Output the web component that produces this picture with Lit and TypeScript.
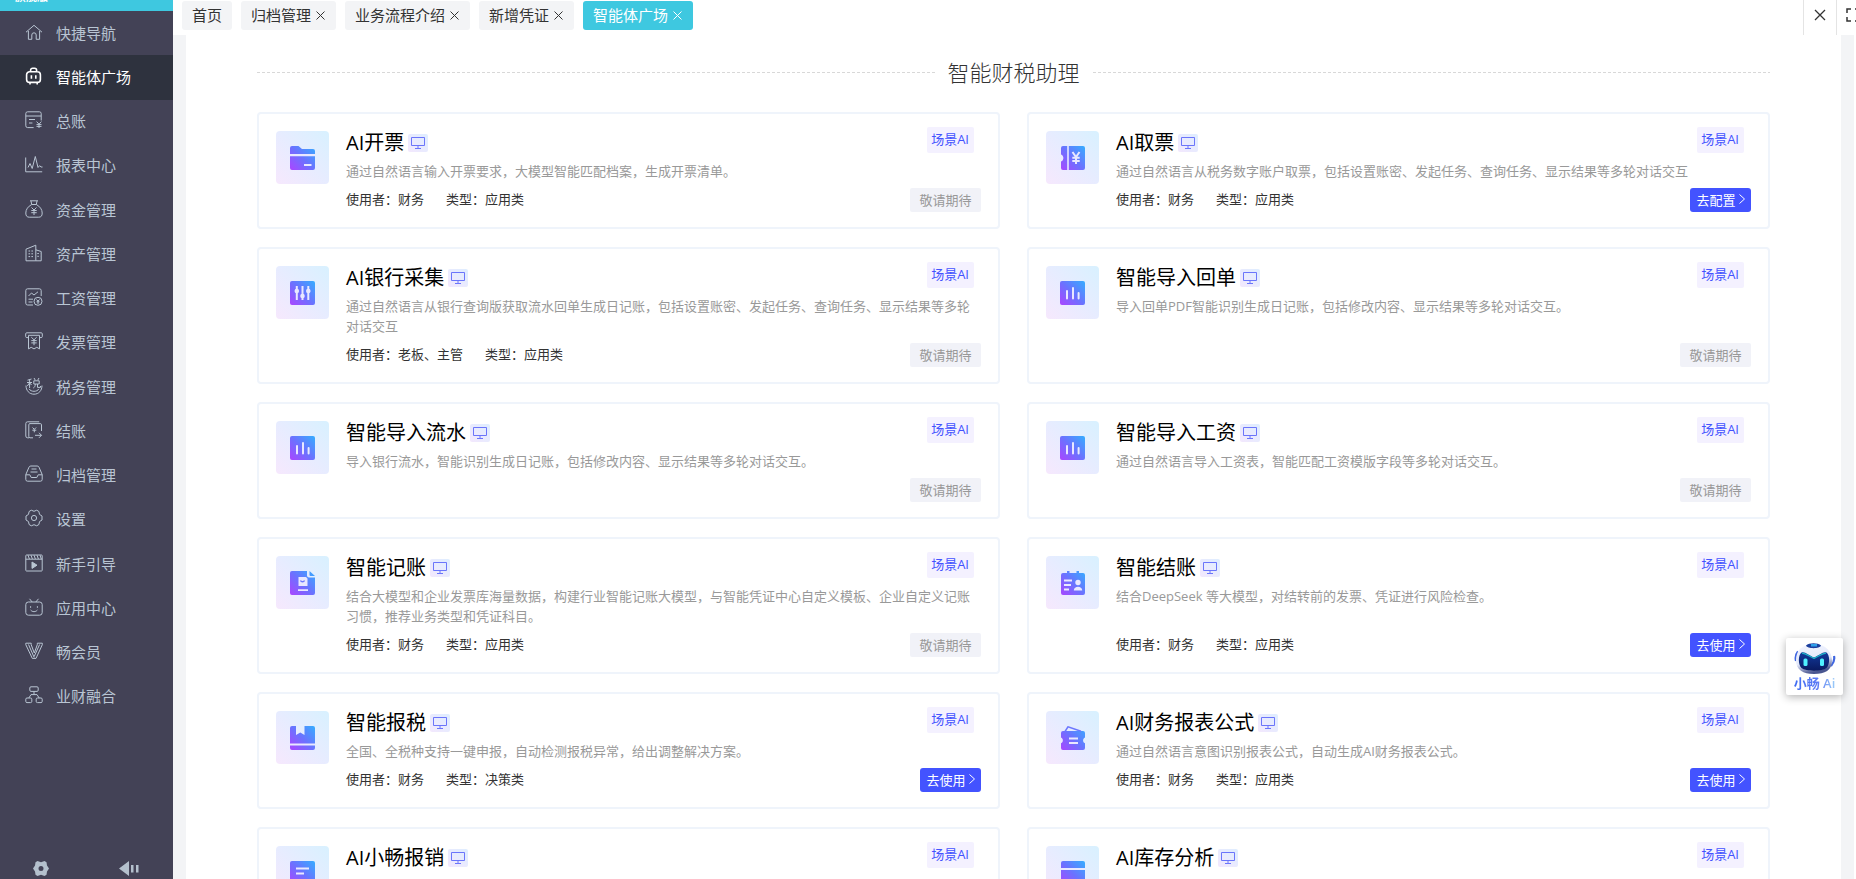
import { LitElement, html, css, svg, nothing, TemplateResult, SVGTemplateResult } from "lit";
import { customElement, property } from "lit/decorators.js";
import { classMap } from "lit/directives/class-map.js";

interface Agent {
  icon: string;
  name: string;
  desc: string;
  user?: string;
  kind?: string;
  action: string;
  ready?: boolean;
}

interface NavItem {
  icon: string;
  label: string;
  active?: boolean;
}

const navIcons: Record<string, SVGTemplateResult> = {
  home: svg`<path d="M1 9.2 9 2.3l8 6.9M3.4 8v8.3h3.4V12a2.2 2.2 0 0 1 4.4 0v4.3h3.4V8"/>`,
  robot: svg`<path stroke-width="1.6" d="M4.6 4.8h7.8a3 3 0 0 1 3 3v4.6a3 3 0 0 1-3 3H4.6a3 3 0 0 1-3-3V7.800a3 3 0 0 1 3-3ZM5.600 4.600V3.200a2 2 0 0 1 2-2h2a2 2 0 0 1 2 2v1.400M6.400 8.200v3.600M10.800 8.200v3.600M5 15.600v1.800M12.200 15.600v1.800"/>`,
  ledger: svg`<path d="M16.200 9.500V2.600a1.800 1.800 0 0 0-1.800-1.800H2.600A1.800 1.800 0 0 0 .8 2.600v12.200a1.800 1.800 0 0 0 1.800 1.800h6M.8 5h15.400M4 8.500h6M4 12h3.400M11.600 10.600l2.400 2.600 2.400-2.600M14 13v4M11.500 13.600h5M11.500 15.400h5"/>`,
  chart: svg`<path d="M.7 2.500v14.300h16.500M3 12.500l2-4 2.200 5L10.300 1.500l2.700 11 1.600-1.800L16 12h1.500"/>`,
  bag: svg`<path d="M5 .8h8M6 1l.7 3.500h4.600L12 1M6.700 4.500C3 6.500.8 9.500.8 13c0 3 1.200 4.200 3.500 4.200h9.400c2.300 0 3.500-1.200 3.500-4.200 0-3.500-2.200-6.500-5.900-8.500M6.500 7.500 9 10l2.500-2.500M9 10v5M6.300 10.500h5.400M6.300 12.700h5.400"/>`,
  building: svg`<path d="M1 16.800V5.200l9.800-4v15.600ZM10.800 5.800l5.400 1.700v9.300h-5.400"/><path stroke-dasharray="1.600 1.300" d="M3.500 7h5.500M3.500 9.800h5.500M3.500 12.600h5.500M12.300 9.500h3M12.300 12.300h3"/>`,
  salary: svg`<path d="M16.200 8V2.600a1.800 1.800 0 0 0-1.800-1.800H2.600A1.800 1.800 0 0 0 .8 2.600v12.600a1.800 1.800 0 0 0 1.800 1.800H8M3.500 8l3-3 2.500 2L13 3.800M3.500 11.200h4.500M3.500 14h4"/><circle cx="13" cy="13.300" r="4"/><path d="m11.500 11.500 1.500 1.600 1.500-1.600M13 13v3M11.500 13.800h3"/>`,
  invoice: svg`<path d="M3.500 5.600H1.800A1.100 1.100 0 0 1 .7 4.500V1.900A1.100 1.100 0 0 1 1.800.8h14.400a1.100 1.100 0 0 1 1.100 1.100v2.600a1.100 1.100 0 0 1-1.100 1.100h-1.700M3.500 3.300v13.600l2.700-1.600L9 16.900l2.800-1.600 2.700 1.600V3.300ZM6.300 5.200 9 7.800l2.700-2.600M9 7.800v5.400M6.300 8.600h5.400M6.300 10.900h5.400"/>`,
  tax: svg`<path d="M1 8.500c0 5 3.200 8.700 8 8.700s8-3.700 8-8.700M4 11.800c1.200 1.800 3 2.500 5 2.500s3.800-.7 5-2.500M2.500 3.200 6.500 2M4.600 2.800V11M2 5.500h5M4.500 6 2.300 9M4.800 6l1.700 2M9 1l1.200 2M14 1l-1.200 2M8.800 3.800h5.400v3.200H8.800ZM10.300 7c0 2-.6 3.200-2 4M12.500 7v3.400h3V9"/>`,
  close: svg`<path d="M4 16.800H2.600A1.800 1.800 0 0 1 .8 15V2.600A1.800 1.800 0 0 1 2.600.8h11.600M16.500 10V3.800a1.200 1.200 0 0 0-1.200-1.200H5a1.200 1.200 0 0 0-1.200 1.200v11.600A1.400 1.400 0 0 0 5 16.800h3M7.500 6.500 9.300 8.300l1.800-1.800M9.300 8.300v3M7.300 9.200h4M10 14.300h6.500M14 11.800l2.500 2.500-2.500 2.500"/>`,
  archive: svg`<path d="M.8 9.600 4 2.200A2 2 0 0 1 5.800 1h6.400A2 2 0 0 1 14 2.200l3.200 7.400v4.800a1.800 1.800 0 0 1-1.800 1.800H2.600a1.800 1.800 0 0 1-1.800-1.800ZM.8 9.800h4l1.400 2.700h5.600l1.400-2.700h4M6.500 4h5M5.500 7h7"/>`,
  setting: svg`<path d="M6.300 1.200 9 2.300l2.700-1.100 2.200 1.300.6 2.900L17 7v4l-2.500 1.600-.6 2.900-2.200 1.300L9 15.700l-2.700 1.100-2.200-1.300-.6-2.900L1 11V7l2.500-1.600.6-2.900Z"/><circle cx="9" cy="9" r="2.600"/>`,
  guide: svg`<path d="M1.500 1h15a.7.7 0 0 1 .7.700v14.600a.7.700 0 0 1-.7.700h-15a.7.700 0 0 1-.7-.7V1.700A.7.700 0 0 1 1.500 1ZM.8 5.200h16.400M3 1.200l1.400 3.800M6 1.200l1.400 3.800M9 1.200l1.400 3.800M12 1.200l1.400 3.800M15 1.200l1.300 3.800"/><path fill="currentColor" d="m7 8 5 3.200-5 3.200Z"/>`,
  app: svg`<path d="M3.400 4h11.200A2.600 2.600 0 0 1 17.200 6.600v8a2.600 2.600 0 0 1-2.600 2.600H3.400A2.600 2.600 0 0 1 .8 14.600v-8A2.600 2.600 0 0 1 3.400 4ZM4.500.8 7.200 4M13.500.8 10.800 4M5.600 8.200v1.600M12.400 8.200v1.600M5.600 12c1.800 2.200 5 2.200 6.800 0"/>`,
  vip: svg`<path d="M.8 1.200h5.400v1.500L9.300 11l3-8.300V1.200h5v1.500L11 16.400H7.300L.8 2.700ZM3.500 2.500 9.200 15.500M14.600 2.500 9.200 14.500"/>`,
  tree: svg`<rect x="4.800" y=".8" width="8.400" height="4.600" rx="1.200"/><rect x=".8" y="12" width="6" height="4.600" rx="1.200"/><rect x="11.200" y="12" width="6" height="4.600" rx="1.200"/><path d="M9 5.400v3.200M3.800 12 6 8.600h6l2.200 3.400"/>`,
};

const agentIcons: Record<string, SVGTemplateResult> = {
  folder: svg`<path class="g" d="M0 2a2 2 0 0 1 2-2h6.500l3.500 3h11a2 2 0 0 1 2 2v17a2 2 0 0 1-2 2H2a2 2 0 0 1-2-2Z"/><path class="k" d="M0 8h25v2.200H0ZM14 18h7.500v2H14Z"/>`,
  ticket: svg`<path class="g" d="M1 2a2 2 0 0 1 2-2h20a2 2 0 0 1 2 2v20a2 2 0 0 1-2 2H3a2 2 0 0 1-2-2v-6.500c3.200-1 3.200-6 0-7Z"/><path class="k" d="M7.200 0h1.600v24H7.200Z"/><path class="l" d="m12.500 6 3.500 5 3.500-5M16 11v7M12.300 11.700h7.400M12.300 15h7.400"/>`,
  sliders: svg`<rect class="g" width="25" height="24" rx="2"/><path class="l" d="M6.800 5v14M12.500 5v14M18.300 5v14"/><circle class="k" cx="6.800" cy="10" r="2.300"/><circle class="k" cx="12.500" cy="15" r="2.300"/><circle class="k" cx="18.300" cy="10" r="2.300"/>`,
  bars: svg`<rect class="g" width="25" height="24" rx="2"/><path class="l" stroke-linecap="round" stroke-width="2.600" d="M7 10v7.500M13 7v10.500M18.600 12v5.500"/>`,
  doc: svg`<path class="g" d="M2 0h15v4.500A2 2 0 0 0 19 6.500h6V22a2 2 0 0 1-2 2H2a2 2 0 0 1-2-2V2a2 2 0 0 1 2-2ZM19.500 0 25 5h-4.500a1 1 0 0 1-1-1Z"/><path class="k" d="M9 6h7l1.500 1.500V15h-9V6ZM8 18.200h10V20H8Z"/><path class="g-line" d="M10.500 9.500c.8 1.800 3.200 1.800 4 0"/>`,
  board: svg`<path class="g" d="M3 2h4V0h2.500v2h7V0H19v2h4a2 2 0 0 1 2 2v18a2 2 0 0 1-2 2H3a2 2 0 0 1-2-2V4a2 2 0 0 1 2-2Z"/><path class="k" d="M4 8.500h8v2H4ZM4 13h7v2H4ZM4 17.500h5v2H4Z"/><circle class="k" cx="18" cy="11.500" r="2.700"/><path class="k" d="M13.800 19.500c0-5 8.400-5 8.400 0Z"/>`,
  book: svg`<path class="g" d="M2 0h4v9l4.300-2.500L14.500 9V0H23a2 2 0 0 1 2 2v20a2 2 0 0 1-2 2H2a2 2 0 0 1-2-2V2a2 2 0 0 1 2-2Z"/><path class="k" d="M0 17.500h25v2H0Z"/>`,
  coupon: svg`<path class="g" d="M3 5h20a2 2 0 0 1 2 2v4.500c-2.500.8-2.500 5 0 5.800V22a2 2 0 0 1-2 2H3a2 2 0 0 1-2-2v-4.700c2.500-.8 2.500-5 0-5.800V7a2 2 0 0 1 2-2Z"/><path class="g-line" d="M5 5.500 8 .800l13 4.500"/><path class="k" d="M9 11.500h9v2H9ZM9 16h9v2H9Z"/>`,
  note: svg`<rect class="g" width="25" height="24" rx="2"/><path class="k" d="M6 6.500h13v2H6ZM6 11.500h8v2H6Z"/>`,
  panel: svg`<rect class="g" x="1" width="24" height="24" rx="2"/><path class="k" d="M1 7h24v2H1ZM13 18h8v2h-8Z"/>`,
};

@customElement("agent-card")
export class AgentCard extends LitElement {
  @property({ attribute: false }) agent!: Agent;

  static styles = css`
    :host {
      display: flex;
      gap: 17px;
      box-sizing: border-box;
      padding: 13px 17px 15px;
      border: 2px solid #eff4fb;
      border-radius: 4px;
      background: #fff;
    }
    .tile {
      flex: none;
      display: grid;
      place-items: center;
      width: 53px;
      height: 53px;
      margin-top: 4px;
      border-radius: 4px;
      background: linear-gradient(to top right, #f6e8fd, #e7ecff 50%, #d8f1ff);
    }
    .glyph {
      width: 25px;
      height: 24px;
    }
    .g { fill: url(#tint); }
    .g-line { fill: none; stroke: #6d78ff; stroke-width: 1.5; }
    .k { fill: #e9e8ff; }
    .l { fill: none; stroke: #e9e8ff; stroke-width: 2; }
    .body {
      flex: 1;
      min-width: 0;
      display: flex;
      flex-direction: column;
    }
    .head {
      display: flex;
      align-items: flex-start;
      justify-content: space-between;
      height: 28px;
    }
    .title {
      display: flex;
      align-items: center;
      gap: 4px;
      margin: 4px 0 0;
      font-size: 20px;
      line-height: 24px;
      font-weight: 400;
      color: #000;
    }
    .device {
      display: grid;
      place-items: center;
      width: 20px;
      height: 18px;
      border-radius: 2px;
      background: linear-gradient(to top right, #f3e8fd, #deedff);
    }
    .device svg {
      width: 14px;
      height: 12px;
      fill: none;
      stroke: #6b75fb;
    }
    .tag {
      margin-right: 7px;
      padding: 0 5px 2px 4px;
      border-radius: 2px;
      background: #f4f1ff;
      color: #4353ff;
      font-size: 13px;
      line-height: 24px;
    }
    .desc {
      min-height: 20px;
      margin: 6px 2px 7px 0;
      font-size: 13px;
      line-height: 20px;
      color: #999;
    }
    .foot {
      display: flex;
      align-items: center;
      gap: 22px;
      height: 24px;
      margin-top: auto;
      font-size: 13px;
      color: #333;
    }
    .fact {
      padding-bottom: 3px;
    }
    .action {
      display: flex;
      align-items: center;
      justify-content: center;
      gap: 3px;
      height: 24px;
      margin-left: auto;
      border: 0;
      border-radius: 2px;
      font: inherit;
      white-space: nowrap;
    }
    .wait {
      min-width: 71px;
      padding: 0 9px 2px;
      background: #f1f2f8;
      color: #999;
    }
    .go {
      min-width: 61px;
      padding: 0 6px 2px;
      border-radius: 3px;
      background: #4353ff;
      color: #fff;
      cursor: pointer;
    }
    .go svg {
      width: 6px;
      height: 10px;
      fill: none;
      stroke: currentColor;
    }
  `;

  render(): TemplateResult {
    const a = this.agent;
    return html`
      <div class="tile">
        <svg class="glyph" viewBox="0 0 25 24" aria-hidden="true">
          <defs>
            <linearGradient id="tint" gradientUnits="userSpaceOnUse" x1="0" y1="24" x2="25" y2="0">
              <stop offset="0" stop-color="#ab45ff" />
              <stop offset="0.500" stop-color="#6b72ff" />
              <stop offset="1" stop-color="#35adff" />
            </linearGradient>
          </defs>
          ${agentIcons[a.icon]}
        </svg>
      </div>
      <div class="body">
        <div class="head">
          <h3 class="title">
            ${a.name}
            <span class="device">
              <svg viewBox="0 0 14 12" aria-hidden="true">
                <path d="M.5.500h13v8H.5ZM7 8.500v3M4 11.500h6" />
              </svg>
            </span>
          </h3>
          <span class="tag">场景AI</span>
        </div>
        <p class="desc">${a.desc}</p>
        <div class="foot">
          ${a.user
            ? html`<span class="fact">使用者：${a.user}</span><span class="fact">类型：${a.kind}</span>`
            : nothing}
          ${a.ready
            ? html`<button class="action go" type="button">
                ${a.action}<svg viewBox="0 0 6 10" aria-hidden="true"><path d="m.5.500 5 4.500-5 4.500" /></svg>
              </button>`
            : html`<button class="action wait" type="button" disabled>${a.action}</button>`}
        </div>
      </div>
    `;
  }
}

@customElement("app-root")
export class AppRoot extends LitElement {
  private nav: NavItem[] = [
    { icon: "home", label: "快捷导航" },
    { icon: "robot", label: "智能体广场", active: true },
    { icon: "ledger", label: "总账" },
    { icon: "chart", label: "报表中心" },
    { icon: "bag", label: "资金管理" },
    { icon: "building", label: "资产管理" },
    { icon: "salary", label: "工资管理" },
    { icon: "invoice", label: "发票管理" },
    { icon: "tax", label: "税务管理" },
    { icon: "close", label: "结账" },
    { icon: "archive", label: "归档管理" },
    { icon: "setting", label: "设置" },
    { icon: "guide", label: "新手引导" },
    { icon: "app", label: "应用中心" },
    { icon: "vip", label: "畅会员" },
    { icon: "tree", label: "业财融合" },
  ];

  private tabs = ["首页", "归档管理", "业务流程介绍", "新增凭证", "智能体广场"];

  private agents: Agent[] = [
    { icon: "folder", name: "AI开票", desc: "通过自然语言输入开票要求，大模型智能匹配档案，生成开票清单。", user: "财务", kind: "应用类", action: "敬请期待" },
    { icon: "ticket", name: "AI取票", desc: "通过自然语言从税务数字账户取票，包括设置账密、发起任务、查询任务、显示结果等多轮对话交互", user: "财务", kind: "应用类", action: "去配置", ready: true },
    { icon: "sliders", name: "AI银行采集", desc: "通过自然语言从银行查询版获取流水回单生成日记账，包括设置账密、发起任务、查询任务、显示结果等多轮对话交互", user: "老板、主管", kind: "应用类", action: "敬请期待" },
    { icon: "bars", name: "智能导入回单", desc: "导入回单PDF智能识别生成日记账，包括修改内容、显示结果等多轮对话交互。", action: "敬请期待" },
    { icon: "bars", name: "智能导入流水", desc: "导入银行流水，智能识别生成日记账，包括修改内容、显示结果等多轮对话交互。", action: "敬请期待" },
    { icon: "bars", name: "智能导入工资", desc: "通过自然语言导入工资表，智能匹配工资模版字段等多轮对话交互。", action: "敬请期待" },
    { icon: "doc", name: "智能记账", desc: "结合大模型和企业发票库海量数据，构建行业智能记账大模型，与智能凭证中心自定义模板、企业自定义记账习惯，推荐业务类型和凭证科目。", user: "财务", kind: "应用类", action: "敬请期待" },
    { icon: "board", name: "智能结账", desc: "结合DeepSeek 等大模型，对结转前的发票、凭证进行风险检查。", user: "财务", kind: "应用类", action: "去使用", ready: true },
    { icon: "book", name: "智能报税", desc: "全国、全税种支持一键申报，自动检测报税异常，给出调整解决方案。", user: "财务", kind: "决策类", action: "去使用", ready: true },
    { icon: "coupon", name: "AI财务报表公式", desc: "通过自然语言意图识别报表公式，自动生成AI财务报表公式。", user: "财务", kind: "应用类", action: "去使用", ready: true },
    { icon: "note", name: "AI小畅报销", desc: "", action: "敬请期待" },
    { icon: "panel", name: "AI库存分析", desc: "", action: "敬请期待" },
  ];

  static styles = css`
    :host {
      display: flex;
      height: 100vh;
      overflow: hidden;
      background: #fff;
      font-family: "Open Sans", "Noto Sans CJK SC", sans-serif;
      color: #333;
    }
    .sidebar {
      flex: none;
      display: flex;
      flex-direction: column;
      width: 173px;
      background: #434256;
    }
    .brand {
      display: flex;
      align-items: flex-end;
      height: 11px;
      padding-left: 15px;
      overflow: hidden;
      background: #3ec8e0;
      color: #fff;
      font-size: 11px;
      font-weight: 700;
      line-height: 20px;
    }
    .brand span {
      margin-bottom: 4px;
    }
    .nav {
      flex: 1;
      display: flex;
      flex-direction: column;
      min-height: 0;
    }
    .item {
      flex: 1;
      display: flex;
      align-items: center;
      gap: 13px;
      padding: 0 0 2px 25px;
      color: #b9c5d3;
      font-size: 15px;
      text-decoration: none;
    }
    .item svg {
      width: 18px;
      height: 18px;
      margin-bottom: 1px;
      fill: none;
      stroke: currentColor;
      overflow: visible;
    }
    .item.active {
      background: #2e323e;
      color: #fff;
    }
    .tools {
      display: flex;
      align-items: flex-end;
      justify-content: space-between;
      box-sizing: border-box;
      height: 160px;
      padding: 0 34px 2px 33px;
    }
    .tool {
      display: flex;
      padding: 0;
      border: 0;
      background: none;
      color: #b4c0cd;
    }
    .tool svg {
      height: 17px;
      fill: currentColor;
    }
    .main {
      flex: 1;
      min-width: 0;
      display: flex;
      flex-direction: column;
    }
    .topbar {
      flex: none;
      display: flex;
      justify-content: space-between;
      height: 35px;
    }
    .tabs {
      display: flex;
      gap: 9px;
      padding: 1px 0 5px 9px;
    }
    .tab {
      display: flex;
      align-items: center;
      gap: 4px;
      padding: 0 10px 2px;
      border-radius: 3px;
      background: #f3f4f6;
      font-size: 15px;
    }
    .tab.active {
      background: #3ec8e0;
      color: #fff;
    }
    .x {
      display: flex;
      padding: 2px 1px 0;
      border: 0;
      background: none;
      color: inherit;
    }
    .x svg {
      width: 9px;
      height: 9px;
      fill: none;
      stroke: currentColor;
    }
    .window {
      display: flex;
      width: 53px;
      overflow: hidden;
    }
    .win {
      flex: none;
      display: grid;
      place-items: center;
      width: 33px;
      padding: 0 0 5px;
      border: 0;
      border-left: 1px solid #e4e4e4;
      background: none;
      color: #333;
    }
    .win svg {
      width: 14px;
      height: 14px;
      fill: none;
      stroke: currentColor;
    }
    .page {
      flex: 1;
      min-height: 0;
      margin-right: 2px;
      padding: 0 13px;
      background: #f3f4f6;
    }
    .sheet {
      box-sizing: border-box;
      height: 100%;
      padding: 23px 71px 0;
      overflow: hidden;
      background: #fff;
    }
    .heading {
      display: flex;
      align-items: center;
      gap: 13px;
      margin: 0 0 26px;
      font-size: 22px;
      line-height: 28px;
      font-weight: 300;
    }
    .rule {
      flex: 1;
      height: 1px;
      background: repeating-linear-gradient(to right, #d8d8d8 0 3px, transparent 3px 5px);
    }
    .cards {
      display: grid;
      grid-template-columns: 1fr 1fr;
      gap: 18px 27px;
    }
    .assistant {
      position: fixed;
      right: 13px;
      bottom: 184px;
      display: flex;
      flex-direction: column;
      align-items: center;
      width: 57px;
      height: 57px;
      padding: 5px 0 0;
      border: 0;
      border-radius: 2px;
      background: #fff;
      box-shadow: 0 2px 8px rgba(0, 0, 0, 0.3);
      font-family: inherit;
    }
    .assistant svg {
      width: 42px;
      height: 32px;
    }
    .assistant span {
      background: linear-gradient(to right, #3e6cf2, #5f7cf5 60%, #9ccdf8);
      background-clip: text;
      color: transparent;
      font-size: 13px;
      line-height: 16px;
      font-weight: 600;
      white-space: nowrap;
    }
  `;

  render(): TemplateResult {
    const cross = html`<svg viewBox="0 0 9 9" aria-hidden="true"><path d="m.5.500 8 8m0-8-8 8" /></svg>`;
    return html`
      <aside class="sidebar">
        <div class="brand"><span>旗舰版</span></div>
        <nav class="nav">
          ${this.nav.map(
            (n) => html`<a class=${classMap({ item: true, active: !!n.active })} href="#">
              <svg viewBox="0 0 18 18" aria-hidden="true">${navIcons[n.icon]}</svg>${n.label}
            </a>`
          )}
        </nav>
        <div class="tools">
          <button class="tool" type="button" aria-label="设置">
            <svg width="16" viewBox="0 0 16 17" aria-hidden="true">
              <path fill-rule="evenodd" d="m4.500 1 3.500 1.200L11.500 1l2 1.200.5 3.300 2 3-2 3-.5 3.300-2 1.200L8 14.800 4.500 16l-2-1.200L2 11.500l-2-3 2-3 .5-3.300ZM8 6a2.500 2.500 0 1 0 0 5 2.500 2.500 0 0 0 0-5Z" />
            </svg>
          </button>
          <button class="tool" type="button" aria-label="收起">
            <svg width="20" viewBox="0 0 20 17" aria-hidden="true"><path d="M0 8.500 10 1v15ZM12 5h2.500v7.500H12ZM17 5h2.500v7.500H17Z" /></svg>
          </button>
        </div>
      </aside>
      <div class="main">
        <header class="topbar">
          <div class="tabs">
            ${this.tabs.map(
              (t, i) => html`<div class=${classMap({ tab: true, active: i === this.tabs.length - 1 })}>
                ${t}${i ? html`<button class="x" type="button" aria-label="关闭">${cross}</button>` : nothing}
              </div>`
            )}
          </div>
          <div class="window">
            <button class="win" type="button" aria-label="关闭全部">
              <svg viewBox="0 0 14 14" aria-hidden="true"><path stroke-width="1.300" d="m2 2 10 10m0-10L2 12" /></svg>
            </button>
            <button class="win" type="button" aria-label="全屏">
              <svg viewBox="0 0 14 14" aria-hidden="true">
                <path stroke-width="1.500" d="M1 5V1h4M9 1h4v4M13 9v4H9M5 13H1V9" />
              </svg>
            </button>
          </div>
        </header>
        <main class="page">
          <div class="sheet">
            <h2 class="heading"><span class="rule"></span>智能财税助理<span class="rule"></span></h2>
            <div class="cards">${this.agents.map((a) => html`<agent-card .agent=${a}></agent-card>`)}</div>
          </div>
        </main>
      </div>
      <button class="assistant" type="button">
        <svg viewBox="0 0 42 32" aria-hidden="true">
          <defs>
            <linearGradient id="shell" x1="0" y1="0" x2="0.300" y2="1">
              <stop offset="0" stop-color="#f4f6ff" />
              <stop offset="0.650" stop-color="#e3e8fa" />
              <stop offset="1" stop-color="#4a5690" />
            </linearGradient>
            <linearGradient id="visor" x1="0" y1="0" x2="0" y2="1">
              <stop offset="0" stop-color="#123a9c" />
              <stop offset="1" stop-color="#0a1a60" />
            </linearGradient>
          </defs>
          <path d="M2 18c-1-4 0-7 2-9.500M40 13c1 4-.4 7-3 10" fill="none" stroke="#3f66e0" stroke-width="2.200" />
          <path d="M20 1c12 0 18 8 18 17 0 9-7 13-18 13S2 27 2 17 9 1 20 1Z" fill="url(#shell)" />
          <path d="M12 2.500C15-.5 24-.5 27 2.500 26 6 13 6 12 2.500Z" fill="#1c3f9e" />
          <path d="M17 1h6v2.500h-6Z" fill="#2e9fe8" />
          <path d="M7.500 9.500c4-1 7 3 12.500 5 5.500-2 8.500-6 12.500-5 3.500 2.500 3.500 12 0 15.500-4 3.500-21 3.500-25 0-3.500-3.500-3.500-13 0-15.500Z" fill="url(#visor)" />
          <path d="M8 10.200c4 0 7 3.200 12 5.200 5-2 8-5.200 12-5.200" fill="none" stroke="#1fb3c8" stroke-width="1.300" />
          <rect x="9.500" y="15.500" width="4" height="7.500" rx="1.500" fill="#4ff0ff" />
          <rect x="26" y="15.500" width="4" height="7.500" rx="1.500" fill="#4ff0ff" />
        </svg>
        <span>小畅 Ai</span>
      </button>
    `;
  }
}
